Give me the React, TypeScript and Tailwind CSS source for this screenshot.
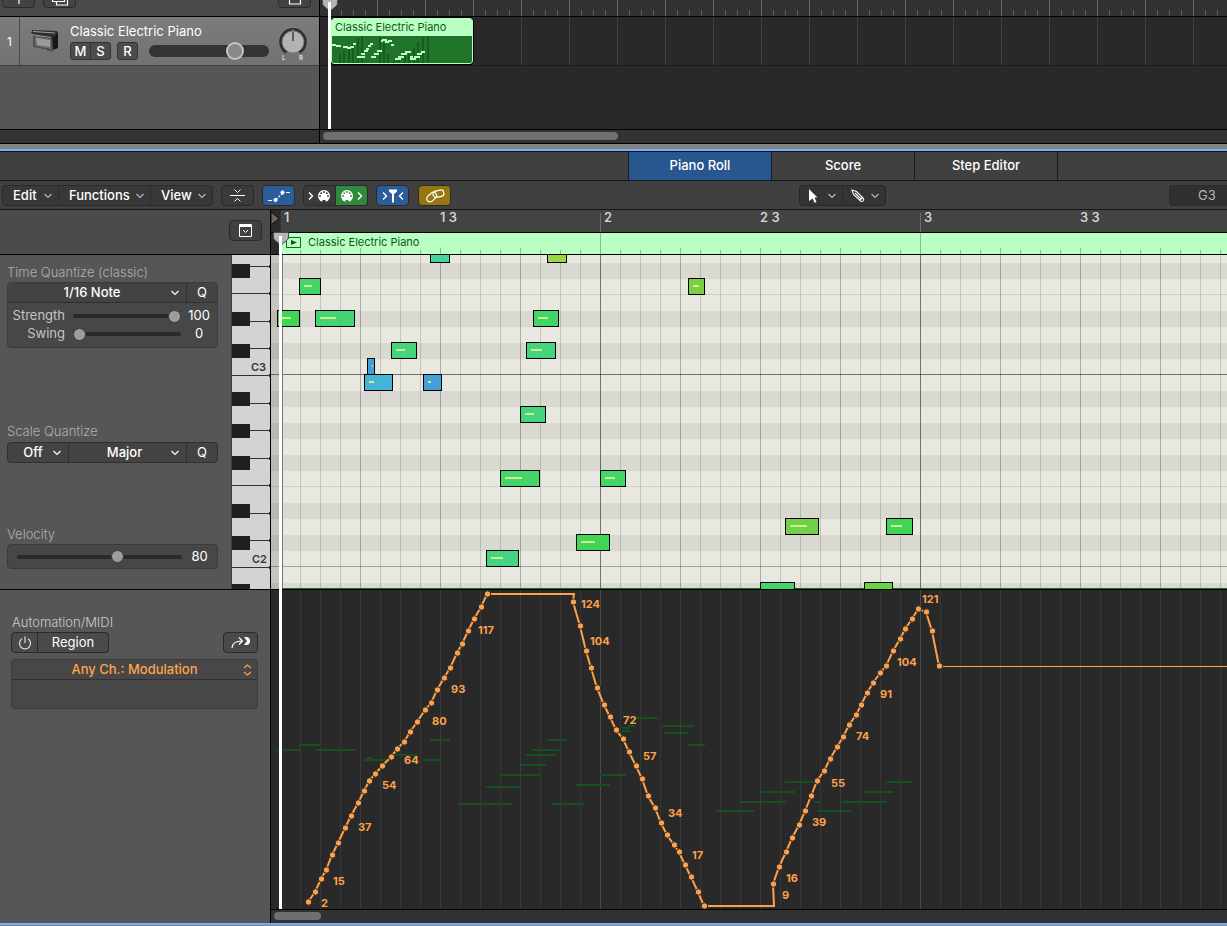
import type { ReactNode } from "react";

const button = "flex items-center justify-center h-[21px] border border-[#2a2a2a] bg-[#3a3a3a] text-white";

// x, y, width, velocity bar, colour (relative to the piano roll canvas)
const notes: [number, number, number, number, string][] = [
  [159, -9, 20, 0, "#49d29d"],
  [276, -9, 20, 0, "#9ad545"],
  [28, 23, 22, 8, "#45d46a"],
  [6, 55, 23, 9, "#41d455"],
  [44, 55, 40, 16, "#45d473"],
  [120, 87, 26, 9, "#45d47e"],
  [96, 103, 8, 1, "#43a1d6"],
  [93, 119, 29, 5, "#45b4d6"],
  [152, 119, 19, 3, "#43a1d6"],
  [262, 55, 26, 10, "#41d468"],
  [255, 87, 30, 11, "#45d47e"],
  [249, 151, 26, 9, "#45d47e"],
  [229, 215, 40, 17, "#45d46a"],
  [329, 215, 26, 10, "#45d46a"],
  [215, 295, 33, 12, "#45d483"],
  [305, 279, 34, 14, "#41d455"],
  [417, 23, 17, 6, "#7ccf44"],
  [514, 263, 34, 17, "#74cf48"],
  [615, 263, 27, 11, "#41d455"],
  [489, 327, 35, 0, "#45d46a"],
  [593, 327, 29, 0, "#67d543"],
];

const rise: [number, number][] = [
  [37, 312], [44, 302], [50, 289], [55, 280], [61, 265], [67, 253], [74, 238], [80, 226], [87, 213], [93, 201],
  [98, 191], [104, 184], [111, 176], [120, 167], [126, 159], [133, 152], [139, 142], [146, 132], [154, 120],
  [160, 113], [166, 100], [173, 88], [179, 78], [186, 63], [191, 54], [197, 41], [203, 29], [210, 17], [216, 4],
];
const fall: [number, number][] = [
  [302, 12], [309, 36], [315, 61], [320, 78], [326, 98], [333, 115], [339, 127], [345, 140], [352, 149], [358, 162],
  [365, 176], [371, 189], [377, 206], [384, 218], [390, 233], [396, 245], [403, 255], [408, 262], [414, 275],
  [420, 287], [427, 302], [433, 316],
];
const second: [number, number][] = [
  [502, 294], [508, 277], [515, 262], [521, 248], [528, 235], [534, 221], [540, 206], [546, 191], [553, 181],
  [559, 169], [566, 157], [572, 147], [578, 135], [585, 125], [590, 115], [596, 103], [602, 93], [609, 83],
  [615, 76], [622, 61], [629, 49], [634, 39], [641, 29], [647, 19], [655, 22], [661, 41], [668, 76],
];
const curve = [...rise, [303, 4], ...fall, [503, 316], ...second];

const values: [number, number, number][] = [
  [50, 317, 2], [62, 295, 15], [87, 241, 37], [111, 199, 54], [133, 174, 64], [161, 135, 80], [180, 103, 93],
  [207, 44, 117], [310, 18, 124], [319, 55, 104], [352, 134, 72], [372, 170, 57], [397, 227, 34], [421, 269, 17],
  [511, 309, 9], [515, 292, 16], [541, 236, 39], [560, 197, 55], [585, 150, 74], [609, 108, 91], [626, 76, 104],
  [651, 13, 121],
];

const ghosts: [number, number, number][] = [
  [6, 159, 23], [28, 154, 22], [44, 159, 40], [93, 169, 24], [96, 167, 5], [124, 164, 22], [152, 169, 19],
  [159, 149, 20], [187, 213, 54], [215, 196, 33], [229, 184, 40], [249, 174, 26], [255, 164, 30], [262, 159, 26],
  [276, 149, 20], [281, 213, 33], [305, 194, 34], [329, 184, 26], [351, 140, 8], [351, 137, 7], [357, 135, 7],
  [364, 127, 23], [391, 135, 32], [393, 142, 24], [417, 154, 17], [445, 220, 38], [469, 211, 46], [490, 201, 34],
  [514, 191, 29], [543, 211, 6], [546, 220, 34], [571, 211, 45], [593, 201, 29], [615, 191, 27],
];

const miniNotes: [number, number, number][] = [
  [0, 8, 4], [4, 9, 5], [11, 10, 5], [15, 11, 4], [18, 10, 4], [21, 7, 3], [25, 20, 8], [29, 17, 4], [32, 14, 4],
  [34, 12, 3], [36, 9, 3], [38, 7, 3], [39, 20, 5], [42, 17, 5], [45, 14, 5], [49, 4, 2], [50, 3, 5], [53, 5, 4],
  [56, 4, 4], [59, 8, 3], [63, 22, 6], [66, 20, 6], [69, 17, 6], [73, 15, 6], [78, 20, 3], [78, 22, 6], [82, 20, 6],
  [85, 17, 5], [89, 15, 4],
];
const miniBars: [number, number][] = [
  [7, 18], [11, 15], [16, 11], [20, 7], [25, 2], [29, 0], [47, 1], [51, 8], [55, 18], [61, 25], [66, 22], [72, 18],
  [76, 16], [81, 12], [85, 6], [90, 1], [95, 1],
];

function Chevron({ className = "text-[#b5b5b5]" }: { className?: string }) {
  return (
    <svg width="10" height="6" viewBox="0 0 10 6" className={`shrink-0 pointer-events-none ${className}`}>
      <path d="M1.5 1 L5 4.5 L8.5 1" fill="none" stroke="currentColor" strokeWidth="1.2" />
    </svg>
  );
}

function MenuButton({ label, className }: { label: string; className: string }) {
  return (
    <button className={`flex items-center justify-between pl-[10px] pr-[5px] ${className}`}>
      {label}
      <Chevron />
    </button>
  );
}

function Dropdown({ label, value, className }: { label: string; value: string; className: string }) {
  return (
    <div className={`relative flex ${className}`}>
      <select aria-label={label} className="w-full appearance-none bg-transparent pr-[10px] text-center font-medium text-white outline-none [text-align-last:center]">
        <option>{value}</option>
      </select>
      <Chevron className="absolute right-[6px] top-[7px] text-white" />
    </div>
  );
}

function Slider({ id, label, value, className }: { id?: string; label?: string; value: number; className: string }) {
  return (
    <input
      id={id}
      aria-label={label}
      type="range"
      min="0"
      max="100"
      defaultValue={value}
      className={`h-1 appearance-none rounded-full bg-[#2a2a2a] outline-none [&::-webkit-slider-thumb]:h-[13px] [&::-webkit-slider-thumb]:w-[13px] [&::-webkit-slider-thumb]:appearance-none [&::-webkit-slider-thumb]:rounded-full [&::-webkit-slider-thumb]:border [&::-webkit-slider-thumb]:border-[#3c3c3c] [&::-webkit-slider-thumb]:bg-[#9d9d9d] ${className}`}
    />
  );
}

function MidiPlug({ holes }: { holes: string }) {
  return (
    <svg width="14" height="14" viewBox="0 0 14 14">
      <circle cx="7" cy="7" r="6" fill="white" />
      <g fill={holes}>
        <circle cx="3" cy="7" r="0.9" />
        <circle cx="4.2" cy="4.2" r="0.9" />
        <circle cx="7" cy="3" r="0.9" />
        <circle cx="9.8" cy="4.2" r="0.9" />
        <circle cx="11" cy="7" r="0.9" />
        <rect x="5.5" y="11" width="3" height="3" />
      </g>
    </svg>
  );
}

function Angle({ left = false }: { left?: boolean }) {
  return (
    <svg width="6" height="10" viewBox="0 0 6 10">
      <path d={left ? "M5 1.5 L1.5 5 L5 8.5" : "M1 1.5 L4.5 5 L1 8.5"} fill="none" stroke="white" strokeWidth="1.4" />
    </svg>
  );
}

function Marker({ className }: { className: string }) {
  return (
    <svg width="16" height="14" viewBox="0 0 16 14" className={`absolute ${className}`}>
      <path d="M0.5 1 Q0.5 0.5 1 0.5 H15 Q15.5 0.5 15.5 1 V6 Q15 8 8 13 Q1 8 0.5 6 Z" fill="#b4b4b4" stroke="#4a4a4a" />
    </svg>
  );
}

function PianoIcon() {
  return (
    <svg width="30" height="26" viewBox="0 0 30 26">
      <path d="M3 8 L22 10 V21 L4 18 Z" fill="#6a6a6a" />
      <path d="M6 10 L20 12 V19 L7 17 Z" fill="#9a9a9a" />
      <path d="M22 9 L28 4 V20 L23 22 Z" fill="#161616" />
      <path d="M2 2 L27 3 L28 5 L22 11 L1 7 Z" fill="#2c2e32" />
      <path d="M3 3.5 L25 5 M1 6.5 L21 9.5" stroke="#9fa3ab" fill="none" />
      <path d="M4 8 V19 M22 11 V24 M18 20 V23" stroke="#333" fill="none" />
      <path d="M4 18.5 L22 22" stroke="#444" fill="none" />
    </svg>
  );
}

function PanKnob() {
  return (
    <svg width="28" height="34" viewBox="0 0 28 34" className="shrink-0">
      <path d="M7.5 24.5 A12.5 12.5 0 1 1 20.5 24.5" fill="none" stroke="#2d2f2d" strokeWidth="2.5" />
      <circle cx="14" cy="14" r="10.5" fill="#b3b3b3" />
      <path d="M14 1 V4" stroke="#3fae49" />
      <path d="M14 4 V13" stroke="#1f1f1f" strokeWidth="1.2" />
      <text x="3" y="32" fontSize="6" fontWeight="700" fill="#ddd">L</text>
      <text x="20" y="32" fontSize="6" fontWeight="700" fill="#ddd">R</text>
    </svg>
  );
}

function TrackHeader() {
  return (
    <div className="flex h-[49px] border-b border-[#3f3f3f] bg-gradient-to-b from-[#7c7c7c] to-[#727272] text-white">
      <div className="flex w-5 items-center justify-center border-r border-[#4b4b4b] pt-px text-xs">1</div>
      <div className="flex w-[50px] items-center justify-center">
        <PianoIcon />
      </div>
      <div className="flex flex-1 flex-col pt-[5px]">
        <div className="h-5 text-[13px] leading-[18px]">Classic Electric Piano</div>
        <div className="flex h-[18px] items-center text-[13px] font-medium">
          <div className="flex overflow-hidden rounded-[3px] border border-[#333] bg-[#4c4c4c] leading-4">
            <button className="w-5 border-r border-[#363636]">M</button>
            <button className="w-[19px]">S</button>
          </div>
          <button className="ml-[6px] w-[21px] rounded-[3px] border border-[#333] bg-[#4c4c4c] leading-4">R</button>
          <input
            aria-label="Track volume"
            type="range"
            min="0"
            max="100"
            defaultValue={75}
            className="ml-[11px] h-3 w-[120px] appearance-none rounded-full bg-[#323632] [&::-webkit-slider-thumb]:h-[18px] [&::-webkit-slider-thumb]:w-[18px] [&::-webkit-slider-thumb]:appearance-none [&::-webkit-slider-thumb]:rounded-full [&::-webkit-slider-thumb]:border-2 [&::-webkit-slider-thumb]:border-[#c4c4c4] [&::-webkit-slider-thumb]:bg-[#858a86]"
          />
        </div>
      </div>
      <div className="pr-3 pt-[11px]">
        <PanKnob />
      </div>
    </div>
  );
}

function TrackTimeline() {
  return (
    <div className="relative min-w-0 flex-1 overflow-hidden bg-[#292929]">
      <svg width="100%" height="66" className="block">
        <defs>
          <pattern id="trackTicks" x="9" width="48" height="16" patternUnits="userSpaceOnUse">
            <rect width="1" height="16" fill="#6a6a6a" />
            <path d="M12.5 10 V16 M24.5 10 V16 M36.5 10 V16" stroke="#5c5c5c" />
          </pattern>
          <pattern id="trackBars" x="9" width="48" height="66" patternUnits="userSpaceOnUse">
            <rect width="1" height="66" fill="#404040" />
          </pattern>
        </defs>
        <rect width="100%" height="16" fill="#323232" />
        <rect width="100%" height="16" fill="url(#trackTicks)" />
        <rect y="16" width="100%" height="1" fill="black" />
        <rect y="17" width="100%" height="48" fill="url(#trackBars)" />
        <rect y="65" width="100%" height="1" fill="#1a1a1a" />
      </svg>
      <div className="absolute left-[10px] top-[17px] h-12 w-[144px] overflow-hidden rounded-[4px] border border-black">
        <div className="h-full overflow-hidden rounded-[3px] border border-[#b8ffc1] bg-[#1f742a]">
          <div className="h-[17px] bg-[#b8ffc1] pl-[3px] text-[11px] leading-4 text-[#0b5b17]">Classic Electric Piano</div>
          <svg width="140" height="27" className="block">
            {miniBars.map(([x, y]) => (
              <rect key={x} x={x} y={y} width="2" height={27 - y} fill="#165c20" />
            ))}
            {miniNotes.map(([x, y, w], i) => (
              <rect key={i} x={x} y={y} width={w} height="2" fill="#b8ffc1" />
            ))}
          </svg>
        </div>
      </div>
      <Marker className="left-[2px] top-[-2px]" />
      <div className="absolute bottom-0 left-2 top-[2px] w-[3px] bg-white" />
    </div>
  );
}

function ModeTab({ children, active = false }: { children: ReactNode; active?: boolean }) {
  return (
    <button
      className={`h-full w-[143px] border-r border-[#1c1c1c] text-[13px] font-medium text-white ${active ? "bg-[#28568f]" : ""}`}
    >
      {children}
    </button>
  );
}

function Toolbar() {
  return (
    <div className="flex h-[29px] items-start gap-2 border-b border-[#161616] bg-[#404040] pl-[2px] pt-1 text-[13px]">
      <div className="flex h-[21px] w-[211px] shrink-0 rounded-[4px] border border-[#2a2a2a] bg-[#383838] font-medium text-white">
        <MenuButton label="Edit" className="w-14 border-r border-[#2e2e2e]" />
        <MenuButton label="Functions" className="w-[92px] border-r border-[#2e2e2e]" />
        <MenuButton label="View" className="flex-1" />
      </div>
      <button aria-label="Collapse mode" className={`${button} w-[33px] shrink-0 rounded-[4px]`}>
        <svg width="15" height="13" viewBox="0 0 15 13" fill="none" stroke="white">
          <path d="M0 6.5 H15 M4.5 0.5 L7.5 3.5 L10.5 0.5 M4.5 12.5 L7.5 9.5 L10.5 12.5" />
        </svg>
      </button>
      <button aria-label="Show automation" className={`${button} w-[33px] shrink-0 rounded-[4px] bg-[#2d5c9a]!`}>
        <svg width="22" height="14" viewBox="0 0 22 14" fill="white" stroke="white">
          <path d="M0 11.5 H4 M18 3.5 H22" strokeWidth="1.2" />
          <path d="M8 10.5 L15 4" strokeDasharray="2 1.5" strokeWidth="1.2" />
          <circle cx="7.5" cy="11" r="1.6" />
          <circle cx="14.5" cy="3.5" r="1.6" />
        </svg>
      </button>
      <div className="flex shrink-0">
        <button aria-label="MIDI in" className={`${button} w-[33px] gap-[3px] rounded-l-[4px]`}>
          <Angle />
          <MidiPlug holes="#333" />
        </button>
        <button aria-label="MIDI out" className={`${button} w-8 gap-[3px] rounded-r-[4px] border-l-0 bg-[#2f8a3d]!`}>
          <MidiPlug holes="#2f8a3d" />
          <Angle />
        </button>
      </div>
      <button aria-label="Catch playhead" className={`${button} w-[33px] shrink-0 gap-[1px] rounded-[4px] bg-[#2d5c9a]!`}>
        <Angle />
        <svg width="8" height="14" viewBox="0 0 8 14" fill="white">
          <path d="M0 0.5 H8 V2.5 L5 5 V13.5 H3 V5 L0 2.5 Z" />
        </svg>
        <Angle left />
      </button>
      <button aria-label="Link" className={`${button} ml-px w-[33px] shrink-0 rounded-[4px] bg-[#97750f]!`}>
        <svg width="20" height="14" viewBox="0 0 20 14" fill="none" stroke="white" strokeWidth="1.2">
          <rect x="1" y="5" width="11" height="6.5" rx="3.2" transform="rotate(-42 6.5 8)" />
          <rect x="8" y="1.5" width="11" height="6.5" rx="3.2" transform="rotate(-12 13.5 5)" />
        </svg>
      </button>
      <div className="ml-[340px] flex h-[21px] w-[87px] shrink-0 rounded-[4px] border border-[#262626] bg-[#343434]">
        <button aria-label="Pointer tool" className="flex w-[43px] items-center justify-between border-r border-[#2a2a2a] pl-[9px] pr-[5px]">
          <svg width="9" height="14" viewBox="0 0 9 14" fill="white">
            <path d="M0 0 L8.5 8.5 H5.5 L7.5 13 L5.5 13.8 L3.7 9.5 L0 12 Z" />
          </svg>
          <Chevron />
        </button>
        <button aria-label="Pencil tool" className="flex flex-1 items-center justify-between pl-2 pr-[5px]">
          <svg width="14" height="14" viewBox="0 0 14 14" fill="none" stroke="white" strokeWidth="1.1">
            <path d="M1 1 L5.5 2.5 L12.5 9.5 Q13.5 12.5 10 12.5 L2.5 5.5 Z M8.5 11.5 L12 8 M4 4 L9.5 9.5" />
          </svg>
          <Chevron />
        </button>
      </div>
      <output className="ml-auto flex h-[21px] w-[58px] items-center rounded-l-[4px] border border-r-0 border-[#2a2a2a] bg-[#303030] pl-7 text-[#b4b4b4]">
        G3
      </output>
    </div>
  );
}

function Keyboard() {
  const blackKeys = [9, 57, 89, 137, 169, 201, 249, 281, 329];
  const whiteLines = [11, 38, 66, 93, 120, 148, 175, 203, 230, 258, 285, 312];
  const fullLines = [38, 120, 230, 312];
  return (
    <svg width="39" height="334" className="shrink-0 bg-[#d3d3d6]">
      <rect width="1" height="334" fill="#3a3a3a" />
      {whiteLines.map((y) => (
        <g key={y} fill="#333">
          <rect x={fullLines.includes(y) ? 1 : 19} y={y} width="38" height="1" />
          <rect x="38" y={y - 1} width="1" height="3" />
        </g>
      ))}
      {blackKeys.map((y) => (
        <rect key={y} x="1" y={y} width="18" height="14" fill="#202020" />
      ))}
      <g fontSize="11" fontWeight="600" fill="#333">
        <text x="20" y="116">C3</text>
        <text x="21" y="308">C2</text>
      </g>
    </svg>
  );
}

function QuantizePanel() {
  return (
    <div className="flex-1 bg-[#565656] pl-[7px] pr-[13px] pt-2 text-[13px] text-[#b0b0b0]">
      <h2 className="h-[19px] leading-[18px] font-light">Time Quantize (classic)</h2>
      <div className="h-[66px] rounded-[4px] border border-[#3a3a3a] bg-[#474747]">
        <div className="flex h-5 border-b border-[#303030] bg-[#434343]">
          <Dropdown label="Time quantize" value="1/16 Note" className="flex-1" />
          <button className="w-[31px] border-l border-[#303030] text-white">Q</button>
        </div>
        <div className="flex flex-col pt-1 text-[#c4c4c4]">
          <div className="flex h-[18px] items-center">
            <label htmlFor="strength" className="w-[57px] text-right">Strength</label>
            <Slider id="strength" value={100} className="ml-2 w-[108px]" />
            <output className="flex-1 text-center text-white">100</output>
          </div>
          <div className="flex h-[18px] items-center">
            <label htmlFor="swing" className="w-[57px] text-right">Swing</label>
            <Slider id="swing" value={0} className="ml-2 w-[108px]" />
            <output className="flex-1 text-center text-white">0</output>
          </div>
        </div>
      </div>
      <h2 className="mt-[74px] h-5 leading-[18px] font-light">Scale Quantize</h2>
      <div className="flex h-[21px] rounded-[4px] border border-[#303030] bg-[#434343]">
        <Dropdown label="Scale quantize" value="Off" className="w-[61px] border-r border-[#303030]" />
        <Dropdown label="Scale" value="Major" className="flex-1 pl-1" />
        <button className="w-[31px] border-l border-[#303030] text-white">Q</button>
      </div>
      <label htmlFor="velocity" className="mt-[62px] block h-[19px] leading-[18px] font-light">Velocity</label>
      <div className="flex h-[25px] items-center rounded-[4px] border border-[#3a3a3a] bg-[#474747] pl-[9px]">
        <Slider id="velocity" value={62} className="w-[165px]" />
        <output className="flex-1 text-center text-white">80</output>
      </div>
    </div>
  );
}

function AutomationPanel() {
  return (
    <div className="flex-1 bg-[#565656] pl-[11px] pr-3 pt-[23px] text-[13px]">
      <h2 className="h-[19px] pl-px font-light text-[#cacaca]">Automation/MIDI</h2>
      <div className="flex justify-between">
        <div className="flex">
          <button aria-label="Automation on" className={`${button} w-[27px] rounded-l-[4px] bg-[#4a4a4a]!`}>
            <svg width="14" height="14" viewBox="0 0 14 14" fill="none" stroke="#ddd" strokeWidth="1.2">
              <path d="M4 2.8 A5.5 5.5 0 1 0 10 2.8 M7 0.5 V7" />
            </svg>
          </button>
          <button className={`${button} w-[71px] rounded-r-[4px] border-l-0 bg-[#4a4a4a]!`}>Region</button>
        </div>
        <button aria-label="Move to front" className={`${button} w-[35px] rounded-[4px] bg-[#4a4a4a]!`}>
          <svg width="20" height="13" viewBox="0 0 20 13" fill="none" stroke="white" strokeWidth="1.2">
            <path d="M1 12 Q1.5 5 11 5 M8 1.5 L11.5 5 L8 8.5" />
            <path d="M13 1 H15 A4 4 0 0 1 15 9 H13 L16 5 Z" fill="white" stroke="none" />
          </svg>
        </button>
      </div>
      <div className="mt-[6px] h-[50px] rounded-[4px] border border-[#3a3a3a] bg-[#474747]">
        <div className="relative flex h-5 border-b border-[#303030]">
          <select aria-label="Automation parameter" className="w-full appearance-none bg-transparent text-center font-medium text-[#ffa24d] outline-none [text-align-last:center]">
            <option>Any Ch.: Modulation</option>
          </select>
          <svg width="9" height="12" viewBox="0 0 9 12" className="pointer-events-none absolute right-[5px] top-[4px]" fill="none" stroke="#ffa24d" strokeWidth="1.2">
            <path d="M1 4 L4.5 1 L8 4 M1 8 L4.5 11 L8 8" />
          </svg>
        </div>
      </div>
    </div>
  );
}

function Ruler() {
  return (
    <svg width="100%" height="45" className="block shrink-0">
      <defs>
        <pattern id="regionTicks" x="9" y="23" width="320" height="21" patternUnits="userSpaceOnUse">
          {Array.from({ length: 16 }, (_, i) => (
            <rect
              key={i}
              x={i * 20}
              y={i === 0 ? 0 : i % 4 === 0 ? 15 : 17}
              width="1"
              height="21"
              fill="#85bd8c"
            />
          ))}
        </pattern>
        <pattern id="barTicks" x="9" y="3" width="320" height="20" patternUnits="userSpaceOnUse">
          <rect width="1" height="20" fill="#6c6c6c" />
        </pattern>
      </defs>
      <rect width="100%" height="22" fill="#434343" />
      <rect width="9" height="45" fill="#2b2b2b" />
      <path d="M0 2 L8 8.5 L0 15 Z" fill="#666" stroke="#111" />
      <rect x="20" y="3" width="100%" height="19" fill="url(#barTicks)" />
      <path d="M9.5 0 V22" stroke="#222" strokeDasharray="1 1" />
      <g fontSize="13" fontWeight="500" fill="#dcdcdc">
        <text x="13" y="12">1</text>
        <text x="169" y="12">1 3</text>
        <text x="333" y="12">2</text>
        <text x="489" y="12">2 3</text>
        <text x="653" y="12">3</text>
        <text x="809" y="12">3 3</text>
      </g>
      <rect y="22" width="100%" height="1" fill="black" />
      <rect x="11" y="23" width="100%" height="21" fill="#b8ffc1" />
      <rect x="12" y="23" width="100%" height="21" fill="url(#regionTicks)" />
      <path d="M15.5 27.5 H29.5 V37.5 H15.5 Z" fill="none" stroke="#0b6a1b" />
      <path d="M20 30 L26 32.5 L20 35 Z" fill="#0b5b17" />
      <text x="37" y="36" fontSize="11" fill="#0b5b17">Classic Electric Piano</text>
      <rect y="44" width="100%" height="1" fill="black" />
    </svg>
  );
}

function PianoRoll() {
  return (
    <svg width="100%" height="334" className="block shrink-0">
      <defs>
        <pattern id="rows" y="120" width="100" height="192" patternUnits="userSpaceOnUse">
          <rect width="100" height="192" fill="#e8e8e0" />
          {[16, 48, 80, 128, 160].map((y) => (
            <rect key={y} y={y} width="100" height="16" fill="#d9d9d1" />
          ))}
          <rect y="111" width="100" height="1" fill="#cfcfc7" />
          <rect y="191" width="100" height="1" fill="#a3a39e" />
        </pattern>
        <pattern id="grid" x="9" width="320" height="334" patternUnits="userSpaceOnUse">
          {Array.from({ length: 16 }, (_, i) => (
            <rect key={i} x={i * 20} width="1" height="334" fillOpacity={i === 0 ? 0.5 : i % 4 === 0 ? 0.26 : 0.15} />
          ))}
        </pattern>
      </defs>
      <rect width="100%" height="334" fill="url(#rows)" />
      <rect y="119" width="100%" height="1" fill="#73736f" />
      <rect x="12" width="100%" height="334" fill="url(#grid)" />
      <rect width="9" height="334" fillOpacity="0.15" />
      <rect x="11" width="1" height="334" fill="#777" />
      <rect x="12" y="333" width="100%" height="1" fill="#15702a" />
      {notes.map(([x, y, w, velocity, color], i) => (
        <g key={i}>
          <rect x={x} y={y} width={w} height="17" fill="black" />
          <rect x={x + 1} y={y + 1} width={w - 2} height="15" fill={color} />
          <rect x={x + 5} y={y + 7} width={velocity} height="2" fill="#c9f08f" />
        </g>
      ))}
    </svg>
  );
}

function AutomationLane() {
  return (
    <div className="min-h-[319px] flex-1 bg-[#292929]">
      <svg width="100%" height="100%" className="block">
        <defs>
          <pattern id="laneGrid" x="9" width="320" height="400" patternUnits="userSpaceOnUse">
            {Array.from({ length: 16 }, (_, i) => (
              <rect key={i} x={i * 20} width="1" height="400" fill={i === 0 ? "#4b4b4b" : i % 4 === 0 ? "#3c3c3c" : "#363636"} />
            ))}
          </pattern>
        </defs>
        <rect x="12" width="100%" height="100%" fill="url(#laneGrid)" />
        {ghosts.map(([x, y, w], i) => (
          <rect key={i} x={x} y={y} width={w} height="2" fill="#17501f" />
        ))}
        <polyline points={curve.map((p) => p.join(",")).join(" ")} fill="none" stroke="#ffa14a" strokeWidth="2" />
        <rect x="671" y="76" width="100%" height="1" fill="#ffa14a" />
        {[...rise, ...fall, ...second].map(([x, y]) => (
          <circle key={x} cx={x + 0.5} cy={y} r="3.2" fill="#ffa14a" stroke="#292929" strokeWidth="1" />
        ))}
        <g fontSize="11" fontWeight="700" fill="#ffa14a">
          {values.map(([x, y, v]) => (
            <text key={x} x={x} y={y}>{v}</text>
          ))}
        </g>
      </svg>
    </div>
  );
}

export default function App() {
  return (
    <main className="flex min-h-screen flex-col overflow-hidden bg-[#848484] font-['Inter',sans-serif]">
      {/* Arrange area */}
      <section className="flex h-[129px] shrink-0">
        <div className="flex w-[320px] shrink-0 flex-col border-r border-black bg-[#565656]">
          <div className="flex h-[17px] items-end border-b border-black bg-[#494949] pb-2 pl-[2px] pr-2">
            <button aria-label="Add track" className={`${button} w-[33px] rounded-[4px] bg-[#434343]!`}>
              <svg width="12" height="12" viewBox="0 0 12 12" stroke="white" strokeWidth="1.2"><path d="M6 1 V12 M1 6 H11" /></svg>
            </button>
            <button aria-label="Duplicate track" className={`${button} ml-2 w-[33px] rounded-[4px] bg-[#434343]!`}>
              <svg width="18" height="16" viewBox="0 0 18 16" fill="none" stroke="white" strokeWidth="1.2"><path d="M1.5 1.5 H13.5 V11.5 H1.5 Z M5.5 12 V15 H16.5 V5" /></svg>
            </button>
            <button aria-label="Track header options" className={`${button} ml-auto w-[33px] rounded-[4px] bg-[#434343]!`}>
              <svg width="14" height="14" viewBox="0 0 14 14" fill="none" stroke="white" strokeWidth="1.2"><path d="M1.5 1.5 H12.5 V13 H1.5 Z" /></svg>
            </button>
          </div>
          <TrackHeader />
        </div>
        <TrackTimeline />
      </section>
      <div className="flex h-[15px] shrink-0 border-y border-black bg-[#333]">
        <div className="w-[320px] shrink-0 border-r border-black" />
        <div className="ml-[3px] mt-[2px] h-2 w-[295px] rounded-full bg-[#6f6f6f]" />
      </div>

      {/* Editor */}
      <section className="mt-[5px] mb-px flex flex-1 flex-col border-b-2 border-t-2 border-[#74aff5] bg-[#404040]">
        <nav className="flex h-[30px] shrink-0 border-b border-t border-[#161616] pl-[628px]">
          <div className="flex border-l border-[#1c1c1c]">
            <ModeTab active>Piano Roll</ModeTab>
            <ModeTab>Score</ModeTab>
            <ModeTab>Step Editor</ModeTab>
          </div>
        </nav>
        <Toolbar />
        <div className="flex flex-1">
          <aside className="flex w-[271px] shrink-0 flex-col border-r border-black">
            <div className="flex h-[45px] items-start justify-end border-b border-black bg-[#4b4b4b] pr-2 pt-[10px]">
              <button aria-label="Inspector" className={`${button} w-[33px] rounded-[4px] bg-[#404040]!`}>
                <svg width="13" height="13" viewBox="0 0 13 13" fill="none" stroke="white">
                  <path d="M0.5 0.5 H12.5 V12.5 H0.5 Z" />
                  <path d="M1 2 H12" strokeWidth="2" />
                  <path d="M4 6 L6.5 8.5 L9 6" />
                </svg>
              </button>
            </div>
            <div className="flex h-[335px] border-b border-black">
              <QuantizePanel />
              <Keyboard />
            </div>
            <AutomationPanel />
          </aside>
          <div className="relative flex min-w-0 flex-1 flex-col overflow-hidden">
            <Ruler />
            <PianoRoll />
            <div className="h-px bg-black" />
            <AutomationLane />
            <div className="h-[14px] border-t border-black bg-[#313131]">
              <div className="ml-[3px] mt-[2px] h-2 w-[47px] rounded-full bg-[#6f6f6f]" />
            </div>
            <Marker className="left-[2px] top-[22px]" />
            <div className="absolute bottom-[14px] left-2 top-[26px] w-[3px] bg-white" />
          </div>
        </div>
      </section>
    </main>
  );
}
